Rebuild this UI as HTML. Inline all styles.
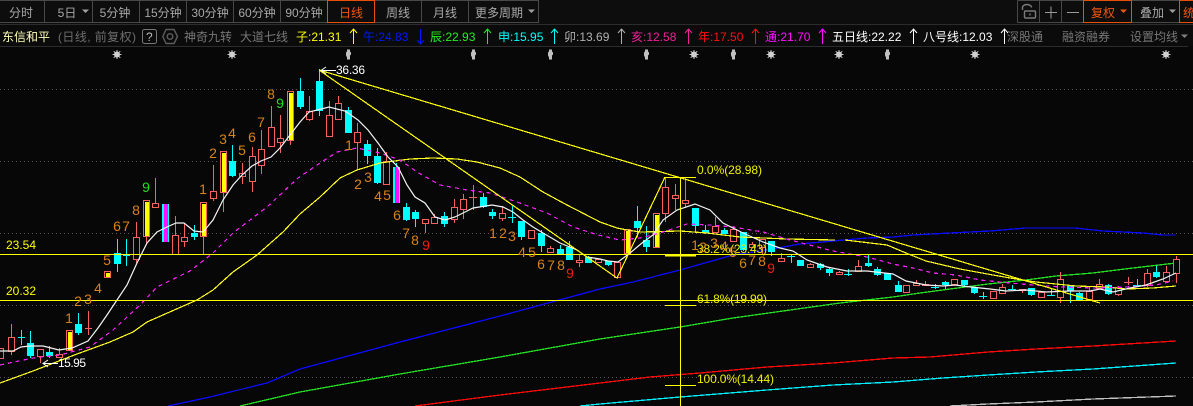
<!DOCTYPE html>
<html><head><meta charset="utf-8"><title>K线</title>
<style>
html,body{margin:0;padding:0;background:#070707;width:1193px;height:406px;overflow:hidden}
svg{display:block;position:absolute;left:0;top:0}
text{font-family:"Liberation Sans","WenQuanYi Zen Hei","Noto Sans CJK SC",sans-serif;font-size:12px}
.n{font-size:14px;text-anchor:middle;fill:#d9821a}
.t{fill:#a8a8a8;text-anchor:middle}
.g{fill:#777}
</style></head><body>
<svg width="1193" height="406" viewBox="0 0 1193 406">
<defs>
<g id="s"><path d="M-4.5 0H4.5M0-4.5V4.5M-3.3-3.3L3.3 3.3M-3.3 3.3L3.3-3.3" stroke="#c8c8c8" stroke-width="1" fill="none"/><circle r="3" fill="#d0d0d0"/></g>
<g id="b"><path d="M-1 -5H2V-3L3-2V0L2 1V3H2V5H-1V3L-2 1V-2L-1-3Z" fill="#c0c0c0"/></g>
</defs>
<rect width="1193" height="406" fill="#070707"/>
<rect width="1193" height="24" fill="#0d0d0d"/>
<rect y="24" width="1193" height="22" fill="#0b0b0b"/>

<!-- toolbar -->
<g fill="none" stroke="#484848" shape-rendering="crispEdges">
<path d="M0 .5H327M374 .5H538.5V22.5H374M0 22.5H327M44.5 0V22M92.5 0V22M139.5 0V22M186.5 0V22M233.5 0V22M280.5 0V22M421.5 0V22M468.5 0V22"/>
<path d="M1017.5 .5H1083M1017.5 .5V22.5H1083M1039.5 0V22M1061.5 0V22M1132 .5H1179M1132 22.5H1179"/>
</g>
<g fill="none" stroke="#e8500a" shape-rendering="crispEdges">
<rect x="327.5" y=".5" width="47" height="22"/>
<rect x="1083.5" y=".5" width="48" height="22"/>
<rect x="1179.5" y=".5" width="20" height="22"/>
</g>
<g>
<text class="t" x="21" y="17">分时</text>
<text class="t" x="67" y="17">5日</text>
<text class="t" x="115" y="17">5分钟</text>
<text class="t" x="163" y="17">15分钟</text>
<text class="t" x="210" y="17">30分钟</text>
<text class="t" x="257" y="17">60分钟</text>
<text class="t" x="304" y="17">90分钟</text>
<text class="t" x="351" y="17" style="fill:#f0560f">日线</text>
<text class="t" x="398" y="17">周线</text>
<text class="t" x="445" y="17">月线</text>
<text class="t" x="499" y="17">更多周期</text>
<text class="t" x="1103" y="17" style="fill:#f0560f">复权</text>
<text class="t" x="1152" y="17">叠加</text>
<text x="1183" y="17" fill="#f0560f">统计</text>
</g>
<g fill="#a0a0a0">
<path d="M82 9.5H89L85.5 13Z"/><path d="M528 9.5H535L531.500 13Z"/><path d="M1169 9.5H1176L1172.500 13Z"/><path d="M1181 34.500H1188L1184.500 38Z" fill="#808080"/>
<path d="M1120 9.5H1127L1123.500 13Z" fill="#f0560f"/>
</g>
<!-- lock -->
<g fill="none" stroke="#7a7a7a" stroke-width="1.4">
<path d="M1022.500 10V7.500A4.500 3 0 0 1 1031.500 7.500"/>
<rect x="1024.500" y="11" width="11" height="7" rx="1"/>
<path d="M1030 13.500V15.500"/>
</g>
<path d="M1045 12.500H1057M1051 6.500V18.500M1067 12.500H1079" stroke="#9a9a9a" stroke-width="1" fill="none" shape-rendering="crispEdges"/>

<!-- row 2 -->
<path d="M0 24.500H1193M0 46.500H1188" stroke="#2c2c2c" shape-rendering="crispEdges"/>
<text x="2" y="41" fill="#ffffb8">东信和平</text>
<text x="58" y="41" fill="#6e6e6e" textLength="78">(日线, 前复权)</text>
<rect x="142.500" y="29.500" width="14" height="14" rx="2" fill="none" stroke="#777"/>
<text x="146" y="41" fill="#bbb">?</text>
<path d="M166 29.500H174L177.500 36.500L174 43.500H166L162.800 36.500Z" fill="none" stroke="#5c5c5c" stroke-width="1.400" stroke-linejoin="round"/>
<circle cx="170" cy="36.500" r="2.800" fill="none" stroke="#5c5c5c" stroke-width="1.400"/>
<text x="184" y="41" class="g">神奇九转</text>
<text x="240" y="41" class="g">大道七线</text>
<text x="296" y="41" fill="#ffff00">子:21.31</text>
<text x="363" y="41" fill="#0018ff">午:24.83</text>
<text x="430" y="41" fill="#22ee22">辰:22.93</text>
<text x="498" y="41" fill="#00ffff">申:15.95</text>
<text x="564" y="41" fill="#b0b0b0">卯:13.69</text>
<text x="631" y="41" fill="#f0209a">亥:12.58</text>
<text x="698" y="41" fill="#ff1010">年:17.50</text>
<text x="765" y="41" fill="#ff10ff">通:21.70</text>
<text x="832" y="41" fill="#ffffff">五日线:22.22</text>
<text x="923" y="41" fill="#ffffff">八号线:12.03</text>
<text x="1007" y="41" class="g">深股通</text>
<text x="1062" y="41" class="g">融资融券</text>
<text x="1130" y="41" class="g">设置均线</text>
<g fill="none" stroke-width="1">
<path d="M353.500 44V29M350 33L353.500 29L357 33" stroke="#ffff00"/>
<path d="M420.500 29V44M417 40L420.500 44L424 40" stroke="#0018ff"/>
<path d="M487.500 44V29M484 33L487.500 29L491 33" stroke="#22ee22"/>
<path d="M554.500 44V29M551 33L554.500 29L558 33" stroke="#00ffff"/>
<path d="M621.500 44V29M618 33L621.500 29L625 33" stroke="#b0b0b0"/>
<path d="M688.500 44V29M685 33L688.500 29L692 33" stroke="#f0209a"/>
<path d="M755.500 44V29M752 33L755.500 29L759 33" stroke="#ff1010"/>
<path d="M822.500 44V29M819 33L822.500 29L826 33" stroke="#ff10ff"/>
<path d="M913.500 44V29M910 33L913.500 29L917 33" stroke="#fff"/>
<path d="M1004.500 44V29M1001 33L1004.500 29L1008 33" stroke="#fff"/>
</g>

<!-- markers -->
<use href="#s" x="117" y="54.500"/><use href="#s" x="232" y="54.500"/><use href="#b" x="348" y="54.500"/><use href="#b" x="473" y="54.500"/><use href="#b" x="550" y="54.500"/><use href="#b" x="646" y="54.500"/><use href="#s" x="694" y="54.500"/><use href="#b" x="733" y="54.500"/><use href="#s" x="771" y="54.500"/><use href="#s" x="839" y="54.500"/><use href="#b" x="887" y="54.500"/><use href="#s" x="975" y="54.500"/><use href="#s" x="1166" y="54.500"/>

<!-- grid -->
<path d="M0 89.500H1193M0 161.500H1193M0 233.500H1193M0 305.500H1193M0 377.500H1193" stroke="#5a5a5a" stroke-dasharray="1 3" shape-rendering="crispEdges"/>

<!-- long moving averages -->
<g fill="none" stroke-width="1.300" shape-rendering="crispEdges">
<path stroke="#0a0aff" d="M168 406L210 397L267 383L300 369L400 342L500 316L600 289L633 282L680 270L733 255L767 250L800 244L833 241L867 238L893 237L913 235L950 233L990 231L1026 228L1075 228L1103 231L1143 233L1163 235L1176 235"/>
<path stroke="#22dd22" d="M240 406L300 392L400 374L500 357L600 339L640 333L680 327L733 318L783 311L840 303L893 297L920 293L950 289L988 284L1026 280L1056 276L1093 273L1133 268L1176 263"/>
<path stroke="#ff0808" d="M415 406L500 395L600 383L650 377L700 373L767 367L833 363L893 358L930 357L988 352L1036 349L1093 346L1176 341"/>
<path stroke="#00eeff" d="M580 406L600 404L680 397L767 390L833 385L893 382L943 378L988 375L1036 372L1093 369L1176 363"/>
<path stroke="#c0c0c0" d="M950 406L988 404L1036 402L1093 399L1176 396"/>
</g>

<!-- candle wicks -->
<path fill="none" stroke="#f96060" shape-rendering="crispEdges" d="M11.500 324V355M40.500 349V363M59.500 348V358M69.500 330V350M88.500 311V335M85 328.500H92M136.500 222V263M146.500 200V245M155.500 178V207M175.500 216V254M184.500 224V247M203.500 202V254M213.500 165V201M223.500 151V212M242.500 163V184M252.500 147V192M261.500 130V174M271.500 106V146M280.500 115V153M290.500 91V145M309.500 96V121M329.500 101V136M338.500 96V120M357.500 123V170M386.500 152V184M425.500 219V233M434.500 214V224M454.500 199V223M463.500 194V219M473.500 185V210M469 197.500H477M502.500 206V221M531.500 230V239M550.500 246V252M579.500 255V267M665.500 177V222M675.500 184V210M685.500 177V208M715.500 217V232M733.500 226V241M752.500 242V247M762.500 239V254M781.500 253V261M810.500 263V268M839.500 271V275M858.500 260V271M916.500 280V285M925.500 281V285M1002.500 284V293M1022.500 289V293M1041.500 291V297M1060.500 272V303M1089.500 287V300M1099.500 279V288M1118.500 286V296M1128.500 277V285M1124 282.500H1133M1147.500 269V287M1166.500 266V282M1176.500 256V283"/>
<path fill="none" stroke="#00ffff" shape-rendering="crispEdges" d="M21.500 330V345M18 337.500H25M30.500 331V358M49.500 346V358M78.500 313V335M117.500 239V272M126.500 239V266M123 255.500H130M194.500 225V240M232.500 145V177M300.500 78V109M319.500 69V116M348.500 107V133M367.500 140V164M377.500 148V184M396.500 163V203M406.500 203V221M415.500 210V227M444.500 212V227M483.500 193V208M492.500 209V219M512.500 206V223M508 217.500H516M521.500 221V240M541.500 230V252M560.500 245V254M569.500 241V260M588.500 256V263M608.500 261V266M637.500 206V237M646.500 226V252M695.500 208V233M705.500 225V234M724.500 228V234M743.500 232V251M771.500 241V256M791.500 255V263M787 256.500H795M820.500 263V270M829.500 267V276M848.500 269V276M844 274.500H852M868.500 255V267M877.500 267V276M898.500 281V292M935.500 284V289M931 287.500H939M945.500 281V289M964.500 280V287M974.500 287V294M983.500 292V299M979 296.500H987M1012.500 285V290M1008 289.500H1016M1031.500 288V296M1051.500 289V296M1047 295.500H1055M1070.500 285V303M1079.500 292V300M1108.500 284V295M1137.500 279V287M1133 285.500H1141M1156.500 266V278"/>
<!-- red bodies -->
<path fill="#070707" stroke="#f96060" shape-rendering="crispEdges" d="M-2.500 348.500h6v10h-6zM8.500 337.500h6v14h-6zM37.500 349.500h6v7h-6zM56.500 354.500h6v3h-6zM66.500 330.500h6v20h-6zM104.500 271.500h6v6h-6zM133.500 237.500h6v22h-6zM143.500 200.500h6v36h-6zM152.500 203.500h6v4h-6zM172.500 235.500h6v19h-6zM181.500 237.500h6v4h-6zM200.500 202.500h6v34h-6zM210.500 191.500h6v7h-6zM220.500 151.500h6v41h-6zM239.500 173.500h6v3h-6zM249.500 156.500h6v25h-6zM258.500 149.500h6v16h-6zM268.500 127.500h6v19h-6zM277.500 138.500h6v4h-6zM287.500 91.500h6v49h-6zM306.500 111.500h6v8h-6zM326.500 115.500h6v21h-6zM335.500 103.500h6v16h-6zM354.500 132.500h6v10h-6zM383.500 161.500h6v23h-6zM422.500 219.500h6v4h-6zM431.500 217.500h6v6h-6zM451.500 207.500h6v12h-6zM460.500 199.500h6v10h-6zM499.500 213.500h6v5h-6zM528.500 230.500h6v8h-6zM547.500 248.500h6v4h-6zM576.500 260.500h6v2h-6zM595.500 259.500h6v3h-6zM614.500 262.500h6v15h-6zM624.500 229.500h6v24h-6zM653.500 213.500h6v34h-6zM662.500 187.500h6v26h-6zM672.500 195.500h6v3h-6zM682.500 200.500h6v3h-6zM712.500 226.500h6v6h-6zM730.500 229.500h6v12h-6zM749.500 244.500h6v3h-6zM759.500 239.500h6v8h-6zM778.500 258.500h6v3h-6zM807.500 264.500h6v3h-6zM836.500 272.500h6v2h-6zM855.500 266.500h6v5h-6zM903.500 285.500h6v7h-6zM913.500 283.500h6v2h-6zM922.500 284.500h6v1h-6zM951.500 279.500h6v5h-6zM990.500 291.500h6v7h-6zM999.500 287.500h6v6h-6zM1019.500 289.500h6v1h-6zM1038.500 292.500h6v5h-6zM1057.500 279.500h6v18h-6zM1086.500 291.500h6v8h-6zM1096.500 284.500h6v4h-6zM1115.500 287.500h6v7h-6zM1144.500 273.500h6v12h-6zM1163.500 272.500h6v9h-6zM1173.500 259.500h6v14h-6z"/>
<!-- yellow inside red -->
<path fill="#ffff00" shape-rendering="crispEdges" d="M68 332h4v18h-4zM106 273h4v4h-4zM145 202h4v34h-4zM202 204h4v32h-4zM222 153h4v39h-4zM289 93h4v47h-4zM626 231h4v22h-4zM655 215h4v32h-4z"/>
<!-- cyan bodies -->
<path fill="#00ffff" shape-rendering="crispEdges" d="M27 343h7v13h-7zM46 352h7v4h-7zM75 324h7v9h-7zM114 253h7v11h-7zM162 204h7v38h-7zM191 233h7v4h-7zM229 161h7v15h-7zM297 91h7v16h-7zM316 81h7v30h-7zM345 110h7v23h-7zM364 144h7v12h-7zM374 156h7v27h-7zM393 167h7v36h-7zM403 207h7v13h-7zM412 212h7v7h-7zM441 216h7v8h-7zM480 197h7v10h-7zM489 212h7v4h-7zM518 221h7v16h-7zM538 233h7v13h-7zM557 249h7v5h-7zM566 247h7v13h-7zM585 257h7v6h-7zM605 261h7v4h-7zM634 221h7v7h-7zM643 240h7v7h-7zM692 208h7v18h-7zM702 230h7v3h-7zM721 230h7v4h-7zM740 232h7v18h-7zM768 241h7v11h-7zM797 260h7v6h-7zM817 264h7v4h-7zM826 269h7v4h-7zM865 263h7v3h-7zM874 269h7v6h-7zM884 273h7v7h-7zM895 285h7v7h-7zM942 282h7v3h-7zM961 280h7v5h-7zM971 287h7v6h-7zM1028 288h7v7h-7zM1067 286h7v5h-7zM1076 293h7v7h-7zM1105 285h7v9h-7zM1153 272h7v5h-7z"/>
<path fill="#ff10ff" shape-rendering="crispEdges" d="M164 204h4v38h-4zM395 167h4v36h-4z"/>

<!-- MA -->
<path fill="none" stroke="#ffff20" stroke-width="1.200" shape-rendering="crispEdges" d="M0 383L33 371L77 354L110 342L133 332L147 322L197 300L213 290L233 272L257 255L283 232L300 214L320 197L340 178L357 170L380 163L410 159L433 158L457 159L477 162L500 168L520 177L543 192L567 205L600 222L617 228L627 230L640 232L680 231L707 233L740 237L787 239L835 240M845 240L887 245L906 253L926 261L960 269L993 275L1016 279L1036 282L1056 284L1076 286L1106 287L1126 289L1153 288L1176 286"/>
<path fill="none" stroke="#ff20ff" stroke-width="1.200" stroke-dasharray="4 4" shape-rendering="crispEdges" d="M0 365L33 358L60 355L90 347L113 330L140 305L157 287L190 271L213 253L233 233L267 207L298 178L320 163L337 152L357 148L380 153L400 160L417 172L440 185L467 190L490 193L517 202L547 213L573 227L598 235L620 240L640 238L660 233L687 224L710 225L733 227L763 232L790 240L833 251L867 257L893 264L913 268L933 273L956 275L980 280L1010 283L1033 285L1060 287L1093 288L1126 287L1156 285L1173 281"/>
<path fill="none" stroke="#f4f4f4" stroke-width="1.200" d="M0 351L13 351L21 347L30 346L43 346L59 350L72 348L88 341L98 328L107 315L117 300L127 285L137 263L147 243L157 232L167 227L176 223L184 223L194 231L203 232L213 220L223 200L233 185L242 175L252 166L261 161L271 157L280 148L290 135L300 122L309 112L329 107L345 111L358 120L368 130L378 143L388 157L398 167L407 185L415 197L425 203L435 217L445 220L455 217L465 212L473 208L492 205L503 207L513 212L523 220L533 227L543 233L560 243L577 250L587 257L600 259L608 261L618 262L630 253L642 243L653 235L663 220L677 210L695 204L710 210L723 223L743 233L763 242L780 248L793 251L807 260L827 267L847 271L867 271L893 274L906 281L926 285L943 286L955 285L971 287L990 289L1006 291L1026 290L1046 292L1070 291L1090 291L1100 289L1113 292L1130 288L1146 285L1163 279L1176 273"/>

<!-- trend lines -->
<g fill="none" stroke="#ffff00" stroke-width="1.200" shape-rendering="crispEdges">
<path d="M319 70L1100 303"/>
<path d="M319 70L617 278L665 177"/>
</g>
<g fill="none" stroke="#ffff00" shape-rendering="crispEdges">
<path d="M0 254.500H1193M0 300.500H1193"/>
<path d="M665 177.500H696M665 305.500H696M665 385.500H696M680.500 177V406"/>
<path d="M665 255.500H696" stroke-width="2"/>
</g>

<!-- price labels -->
<text x="6" y="249" fill="#ffff00" textLength="30">23.54</text>
<text x="6" y="295" fill="#ffff00" textLength="30">20.32</text>
<path d="M321 70.500H336M326 67L321 70.500L326 74" fill="none" stroke="#fff"/>
<text x="336" y="74" fill="#fff" textLength="29">36.36</text>
<path d="M43 363.500H58M48 360L43 363.500L48 367" fill="none" stroke="#fff"/>
<text x="58" y="367" fill="#fff" textLength="28">15.95</text>
<g fill="#f0f000">
<text x="697" y="174" textLength="65">0.0%(28.98)</text>
<text x="697" y="253" textLength="70">38.2%(23.43)</text>
<text x="697" y="303" textLength="70">61.8%(19.99)</text>
<text x="697" y="383" textLength="77">100.0%(14.44)</text>
</g>

<!-- TD digits -->
<text class="n" x="69" y="323">1</text><text class="n" x="78" y="306">2</text><text class="n" x="88" y="304">3</text><text class="n" x="98" y="293">4</text><text class="n" x="107" y="265">5</text><text class="n" x="117" y="231">6</text><text class="n" x="126" y="231">7</text><text class="n" x="136" y="215">8</text><text class="n" x="146" y="192" style="fill:#20e020">9</text>
<text class="n" x="203" y="194">1</text><text class="n" x="213" y="158">2</text><text class="n" x="223" y="144">3</text><text class="n" x="232" y="138">4</text><text class="n" x="242" y="155">5</text><text class="n" x="252" y="142">6</text><text class="n" x="261" y="127">7</text><text class="n" x="271" y="99">8</text><text class="n" x="280" y="108" style="fill:#20e020">9</text>
<text class="n" x="349" y="150">1</text><text class="n" x="358" y="189">2</text><text class="n" x="368" y="182">3</text><text class="n" x="378" y="201">4</text><text class="n" x="387" y="200">5</text><text class="n" x="397" y="220">6</text><text class="n" x="406" y="238">7</text><text class="n" x="415" y="245">8</text><text class="n" x="426" y="250" style="fill:#e82010">9</text>
<text class="n" x="493" y="238">1</text><text class="n" x="503" y="238">2</text><text class="n" x="512" y="241">3</text><text class="n" x="522" y="257">4</text><text class="n" x="532" y="257">5</text><text class="n" x="541" y="269">6</text><text class="n" x="551" y="270">7</text><text class="n" x="561" y="270">8</text><text class="n" x="570" y="278" style="fill:#e82010">9</text>
<text class="n" x="695" y="250">1</text><text class="n" x="703" y="252">2</text><text class="n" x="714" y="248">3</text><text class="n" x="724" y="251">4</text><text class="n" x="733" y="257">5</text><text class="n" x="743" y="268">6</text><text class="n" x="752" y="265">7</text><text class="n" x="762" y="266">8</text><text class="n" x="771" y="273" style="fill:#e82010">9</text>
</svg>
</body></html>
